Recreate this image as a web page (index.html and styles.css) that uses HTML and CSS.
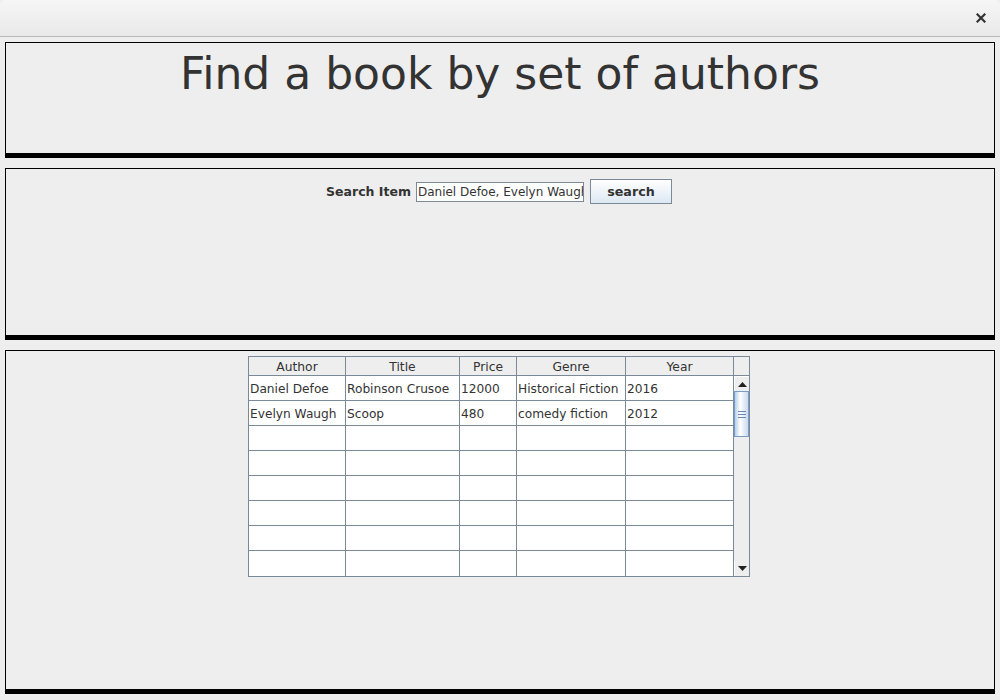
FILE: index.html
```html
<!DOCTYPE html>
<html>
<head>
<meta charset="utf-8">
<link rel="stylesheet" href="styles.css">
</head>
<body>
<div class="window">
  <div class="titlebar">
    <svg class="close" width="10" height="10" viewBox="0 0 10 10"><path d="M1.5 1.5 L8.5 8.5 M8.5 1.5 L1.5 8.5" stroke="#333" stroke-width="2.2" stroke-linecap="square"/></svg>
  </div>
  <div class="content">
    <div class="panel panel-title">
      <h1 class="heading">Find a book by set of authors</h1>
    </div>
    <div class="panel panel-search">
      <div class="search-row">
        <span class="label">Search Item</span>
        <div class="field">Daniel Defoe, Evelyn Waugh</div>
        <button class="btn">search</button>
      </div>
    </div>
    <div class="panel panel-table">
      <div class="table">
        <div class="grid">
          <div class="th">Author</div>
          <div class="th">Title</div>
          <div class="th">Price</div>
          <div class="th">Genre</div>
          <div class="th">Year</div>
          <div class="th corner"></div>

          <div class="td">Daniel Defoe</div>
          <div class="td">Robinson Crusoe</div>
          <div class="td">12000</div>
          <div class="td">Historical Fiction</div>
          <div class="td">2016</div>
          <div class="scrollbar">
            <div class="sb-btn"><svg width="9" height="5" viewBox="0 0 9 5"><path d="M0 5 L4.5 0 L9 5 Z" fill="#222"/></svg></div>
            <div class="sb-track">
              <div class="thumb"><span></span><span></span><span></span></div>
            </div>
            <div class="sb-btn"><svg width="9" height="5" viewBox="0 0 9 5"><path d="M0 0 L9 0 L4.5 5 Z" fill="#222"/></svg></div>
          </div>

          <div class="td">Evelyn Waugh</div>
          <div class="td">Scoop</div>
          <div class="td">480</div>
          <div class="td">comedy fiction</div>
          <div class="td">2012</div>

          <div class="td"></div><div class="td"></div><div class="td"></div><div class="td"></div><div class="td"></div>
          <div class="td"></div><div class="td"></div><div class="td"></div><div class="td"></div><div class="td"></div>
          <div class="td"></div><div class="td"></div><div class="td"></div><div class="td"></div><div class="td"></div>
          <div class="td"></div><div class="td"></div><div class="td"></div><div class="td"></div><div class="td"></div>
          <div class="td"></div><div class="td"></div><div class="td"></div><div class="td"></div><div class="td"></div>
          <div class="td"></div><div class="td"></div><div class="td"></div><div class="td"></div><div class="td"></div>
        </div>
      </div>
    </div>
  </div>
</div>
</body>
</html>
```

FILE: styles.css
```css
* { box-sizing: border-box; }
html, body {
  margin: 0;
  padding: 0;
  width: 1000px;
  height: 700px;
  overflow: hidden;
  background: #eeeeee;
  font-family: "DejaVu Sans", sans-serif;
  color: #333333;
}
.window {
  width: 1000px;
  height: 700px;
  display: flex;
  flex-direction: column;
}
.titlebar {
  height: 37px;
  flex: none;
  background: linear-gradient(#f6f6f6, #e9e9e9);
  border-bottom: 1px solid #b8b8b8;
  border-top-left-radius: 6px;
  border-top-right-radius: 6px;
  display: flex;
  justify-content: flex-end;
  align-items: center;
  padding-right: 14px;
}
.close { display: block; }
.content {
  padding: 5px 5px 0 5px;
  display: flex;
  flex-direction: column;
  gap: 10px;
}
.panel {
  width: 990px;
  border: 1px solid #000;
  border-bottom: 5px solid #000;
  background: #eeeeee;
}
.panel-title { height: 116px; }
.panel-search { height: 172px; }
.panel-table { height: 344px; }
.heading {
  margin: 0;
  padding-top: 5px;
  font-weight: normal;
  font-size: 44px;
  line-height: 51px;
  text-align: center;
  color: #333333;
}
.search-row {
  display: flex;
  justify-content: center;
  align-items: center;
  padding-top: 10px;
  padding-right: 2px;
}
.label {
  font-weight: bold;
  font-size: 12.5px;
  margin-right: 5px;
}
.field {
  width: 168px;
  height: 20px;
  border: 1px solid #7a8a99;
  background: #fff;
  font-size: 12px;
  line-height: 18px;
  padding-left: 1px;
  white-space: nowrap;
  overflow: hidden;
  margin-right: 6px;
}
.btn {
  width: 82px;
  height: 25px;
  border: 1px solid #7a8a99;
  border-radius: 0;
  background: linear-gradient(#ffffff, #dde8f3);
  font-family: "DejaVu Sans", sans-serif;
  font-weight: bold;
  font-size: 12.7px;
  color: #333333;
  padding: 0;
}
.table {
  margin: 5px 0 0 242px;
  width: 502px;
  border: 1px solid #7a8a99;
  background: #fff;
}
.grid {
  display: grid;
  grid-template-columns: 97px 114px 57px 109px 108px 15px;
  grid-template-rows: 19px repeat(8, 25px);
}
.th {
  background: #eeeeee;
  border-right: 1px solid #7a8a99;
  border-bottom: 1px solid #7a8a99;
  font-size: 12.3px;
  line-height: 18px;
  padding-top: 1px;
  text-align: center;
}
.th.corner { border-right: none; }
.td {
  border-right: 1px solid #7a8a99;
  border-bottom: 1px solid #7a8a99;
  font-size: 12.2px;
  line-height: 22px;
  padding-top: 2px;
  padding-left: 1px;
  white-space: nowrap;
  overflow: hidden;
}
.grid > .td:nth-last-child(-n+5) { border-bottom: none; }
.scrollbar {
  grid-column: 6;
  grid-row: 2 / span 8;
  background: #eeeeee;
  display: flex;
  flex-direction: column;
}
.sb-btn {
  height: 15px;
  flex: none;
  background: #eeeeee;
  display: flex;
  align-items: center;
  justify-content: center;
  border-left: 1px solid #fff;
}
.sb-btn:first-child { border-top: 1px solid #fff; }
.sb-track {
  flex: 1;
  background: #eeeeee;
}
.thumb {
  height: 46px;
  border: 1px solid #7a9bc8;
  background: linear-gradient(90deg, #b8cfe8, #ffffff 40%, #c9daf0);
  display: flex;
  flex-direction: column;
  align-items: center;
  justify-content: center;
  gap: 2px;
}
.thumb span {
  display: block;
  width: 8px;
  height: 1px;
  background: #6b86b0;
}
```
